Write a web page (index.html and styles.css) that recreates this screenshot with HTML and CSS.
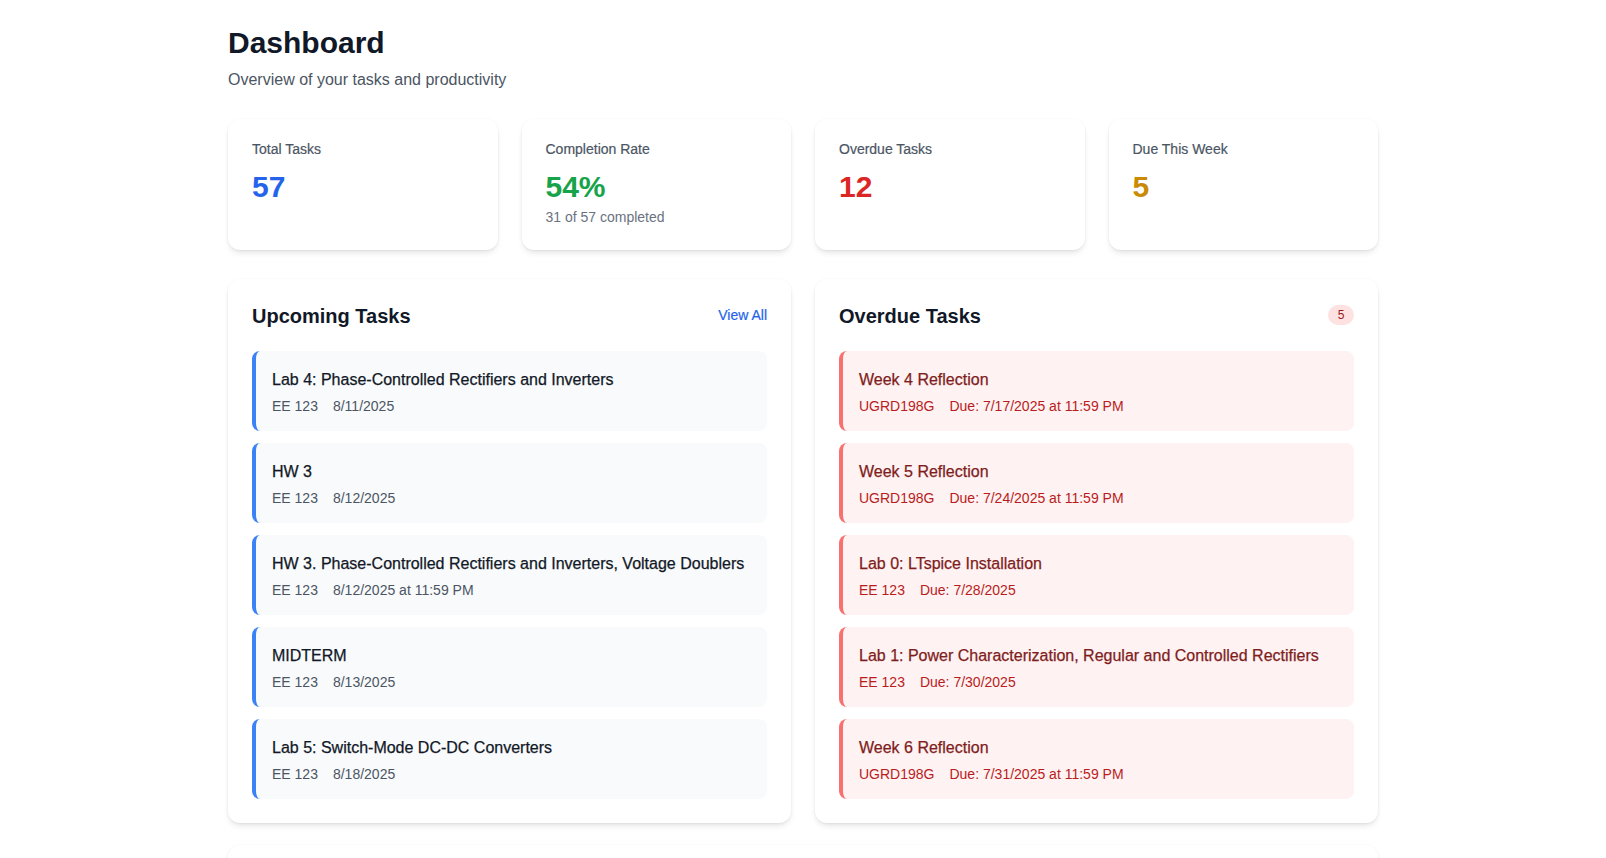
FILE: index.html
```html
<!DOCTYPE html>
<html lang="en">
<head>
<meta charset="utf-8">
<title>Dashboard</title>
<link rel="stylesheet" href="styles.css">
</head>
<body>
<main class="page">
  <header class="page-header">
    <h1 class="page-title">Dashboard</h1>
    <p class="page-subtitle">Overview of your tasks and productivity</p>
  </header>

  <section class="stats">
    <div class="card stat">
      <div class="stat-label">Total Tasks</div>
      <div class="stat-value blue">57</div>
    </div>
    <div class="card stat">
      <div class="stat-label">Completion Rate</div>
      <div class="stat-value green">54%</div>
      <div class="stat-sub">31 of 57 completed</div>
    </div>
    <div class="card stat">
      <div class="stat-label">Overdue Tasks</div>
      <div class="stat-value red">12</div>
    </div>
    <div class="card stat">
      <div class="stat-label">Due This Week</div>
      <div class="stat-value amber">5</div>
    </div>
  </section>

  <section class="panels">
    <div class="card panel">
      <div class="panel-head">
        <h2 class="panel-title">Upcoming Tasks</h2>
        <a class="view-all" href="#">View All</a>
      </div>
      <ul class="task-list">
        <li class="task upcoming">
          <div class="task-title">Lab 4: Phase-Controlled Rectifiers and Inverters</div>
          <div class="task-meta"><span>EE 123</span><span>8/11/2025</span></div>
        </li>
        <li class="task upcoming">
          <div class="task-title">HW 3</div>
          <div class="task-meta"><span>EE 123</span><span>8/12/2025</span></div>
        </li>
        <li class="task upcoming">
          <div class="task-title">HW 3. Phase-Controlled Rectifiers and Inverters, Voltage Doublers</div>
          <div class="task-meta"><span>EE 123</span><span>8/12/2025 at 11:59 PM</span></div>
        </li>
        <li class="task upcoming">
          <div class="task-title">MIDTERM</div>
          <div class="task-meta"><span>EE 123</span><span>8/13/2025</span></div>
        </li>
        <li class="task upcoming">
          <div class="task-title">Lab 5: Switch-Mode DC-DC Converters</div>
          <div class="task-meta"><span>EE 123</span><span>8/18/2025</span></div>
        </li>
      </ul>
    </div>

    <div class="card panel">
      <div class="panel-head">
        <h2 class="panel-title">Overdue Tasks</h2>
        <span class="badge">5</span>
      </div>
      <ul class="task-list">
        <li class="task overdue">
          <div class="task-title">Week 4 Reflection</div>
          <div class="task-meta"><span>UGRD198G</span><span>Due: 7/17/2025 at 11:59 PM</span></div>
        </li>
        <li class="task overdue">
          <div class="task-title">Week 5 Reflection</div>
          <div class="task-meta"><span>UGRD198G</span><span>Due: 7/24/2025 at 11:59 PM</span></div>
        </li>
        <li class="task overdue">
          <div class="task-title">Lab 0: LTspice Installation</div>
          <div class="task-meta"><span>EE 123</span><span>Due: 7/28/2025</span></div>
        </li>
        <li class="task overdue">
          <div class="task-title">Lab 1: Power Characterization, Regular and Controlled Rectifiers</div>
          <div class="task-meta"><span>EE 123</span><span>Due: 7/30/2025</span></div>
        </li>
        <li class="task overdue">
          <div class="task-title">Week 6 Reflection</div>
          <div class="task-meta"><span>UGRD198G</span><span>Due: 7/31/2025 at 11:59 PM</span></div>
        </li>
      </ul>
    </div>
  </section>

  <section class="card panel recent"></section>
</main>
</body>
</html>
```

FILE: styles.css
```css
* { box-sizing: border-box; }

html, body {
  margin: 0;
  padding: 0;
  background: #ffffff;
}

body {
  font-family: "Liberation Sans", Arial, sans-serif;
  color: #111827;
}

.page {
  max-width: 1150px;
  margin: 0 auto;
  padding: 25px 0 40px;
}

.page-header {
  margin-bottom: 27px;
}

.page-title {
  margin: 0;
  font-size: 30px;
  line-height: 36px;
  font-weight: 700;
  color: #111827;
}

.page-subtitle {
  margin: 7px 0 0;
  font-size: 16px;
  line-height: 24px;
  color: #4b5563;
}

.card {
  background: #ffffff;
  border-radius: 12px;
  box-shadow: 0 4px 6px -1px rgba(0, 0, 0, 0.09), 0 2px 4px -2px rgba(0, 0, 0, 0.08), 0 0 0 1px rgba(0, 0, 0, 0.015);
}

.stats {
  display: grid;
  grid-template-columns: repeat(4, 1fr);
  gap: 24px;
  margin-bottom: 29px;
}

.stat {
  padding: 21px 24px 23px;
}

.stat-label {
  font-size: 14px;
  line-height: 18px;
  color: #4b5563;
  -webkit-text-stroke: 0.2px currentColor;
}

.stat-value {
  margin-top: 10px;
  font-size: 30px;
  line-height: 38px;
  font-weight: 700;
}

.stat-sub {
  margin-top: 1px;
  font-size: 14px;
  line-height: 20px;
  color: #6b7280;
}

.blue { color: #2563eb; }
.green { color: #16a34a; }
.red { color: #dc2626; }
.amber { color: #ca8a04; }

.panels {
  display: grid;
  grid-template-columns: 1fr 1fr;
  gap: 24px;
  margin-bottom: 22px;
}

.panel {
  padding: 23px 24px 24px;
}

.panel-head {
  display: flex;
  align-items: center;
  justify-content: space-between;
  height: 28px;
  margin-bottom: 21px;
}

.panel-title {
  margin: 0;
  font-size: 20px;
  line-height: 28px;
  font-weight: 700;
  color: #111827;
}

.view-all {
  font-size: 14px;
  line-height: 20px;
  color: #2563eb;
  text-decoration: none;
  margin-top: -2px;
  -webkit-text-stroke: 0.2px currentColor;
}

.badge {
  display: inline-block;
  min-width: 26px;
  padding: 2px 8px;
  border-radius: 999px;
  background: #fee2e2;
  color: #991b1b;
  font-size: 12px;
  line-height: 16px;
  text-align: center;
  margin-top: -2px;
}

.task-list {
  list-style: none;
  margin: 0;
  padding: 0;
  display: flex;
  flex-direction: column;
  gap: 12px;
}

.task {
  padding: 17px 16px 15px;
  border-radius: 8px;
  border-left: 4px solid;
}

.task.upcoming {
  background: #f9fafb;
  border-left-color: #3b82f6;
}

.task.overdue {
  background: #fef2f2;
  border-left-color: #f87171;
}

.task-title {
  font-size: 16px;
  line-height: 24px;
  font-weight: 500;
  -webkit-text-stroke: 0.25px currentColor;
}

.upcoming .task-title { color: #111827; }
.overdue .task-title { color: #7f1d1d; }

.task-meta {
  margin-top: 4px;
  display: flex;
  gap: 15px;
  font-size: 14px;
  line-height: 20px;
}

.upcoming .task-meta { color: #4b5563; }
.overdue .task-meta { color: #b91c1c; }

.recent {
  min-height: 200px;
}
```
